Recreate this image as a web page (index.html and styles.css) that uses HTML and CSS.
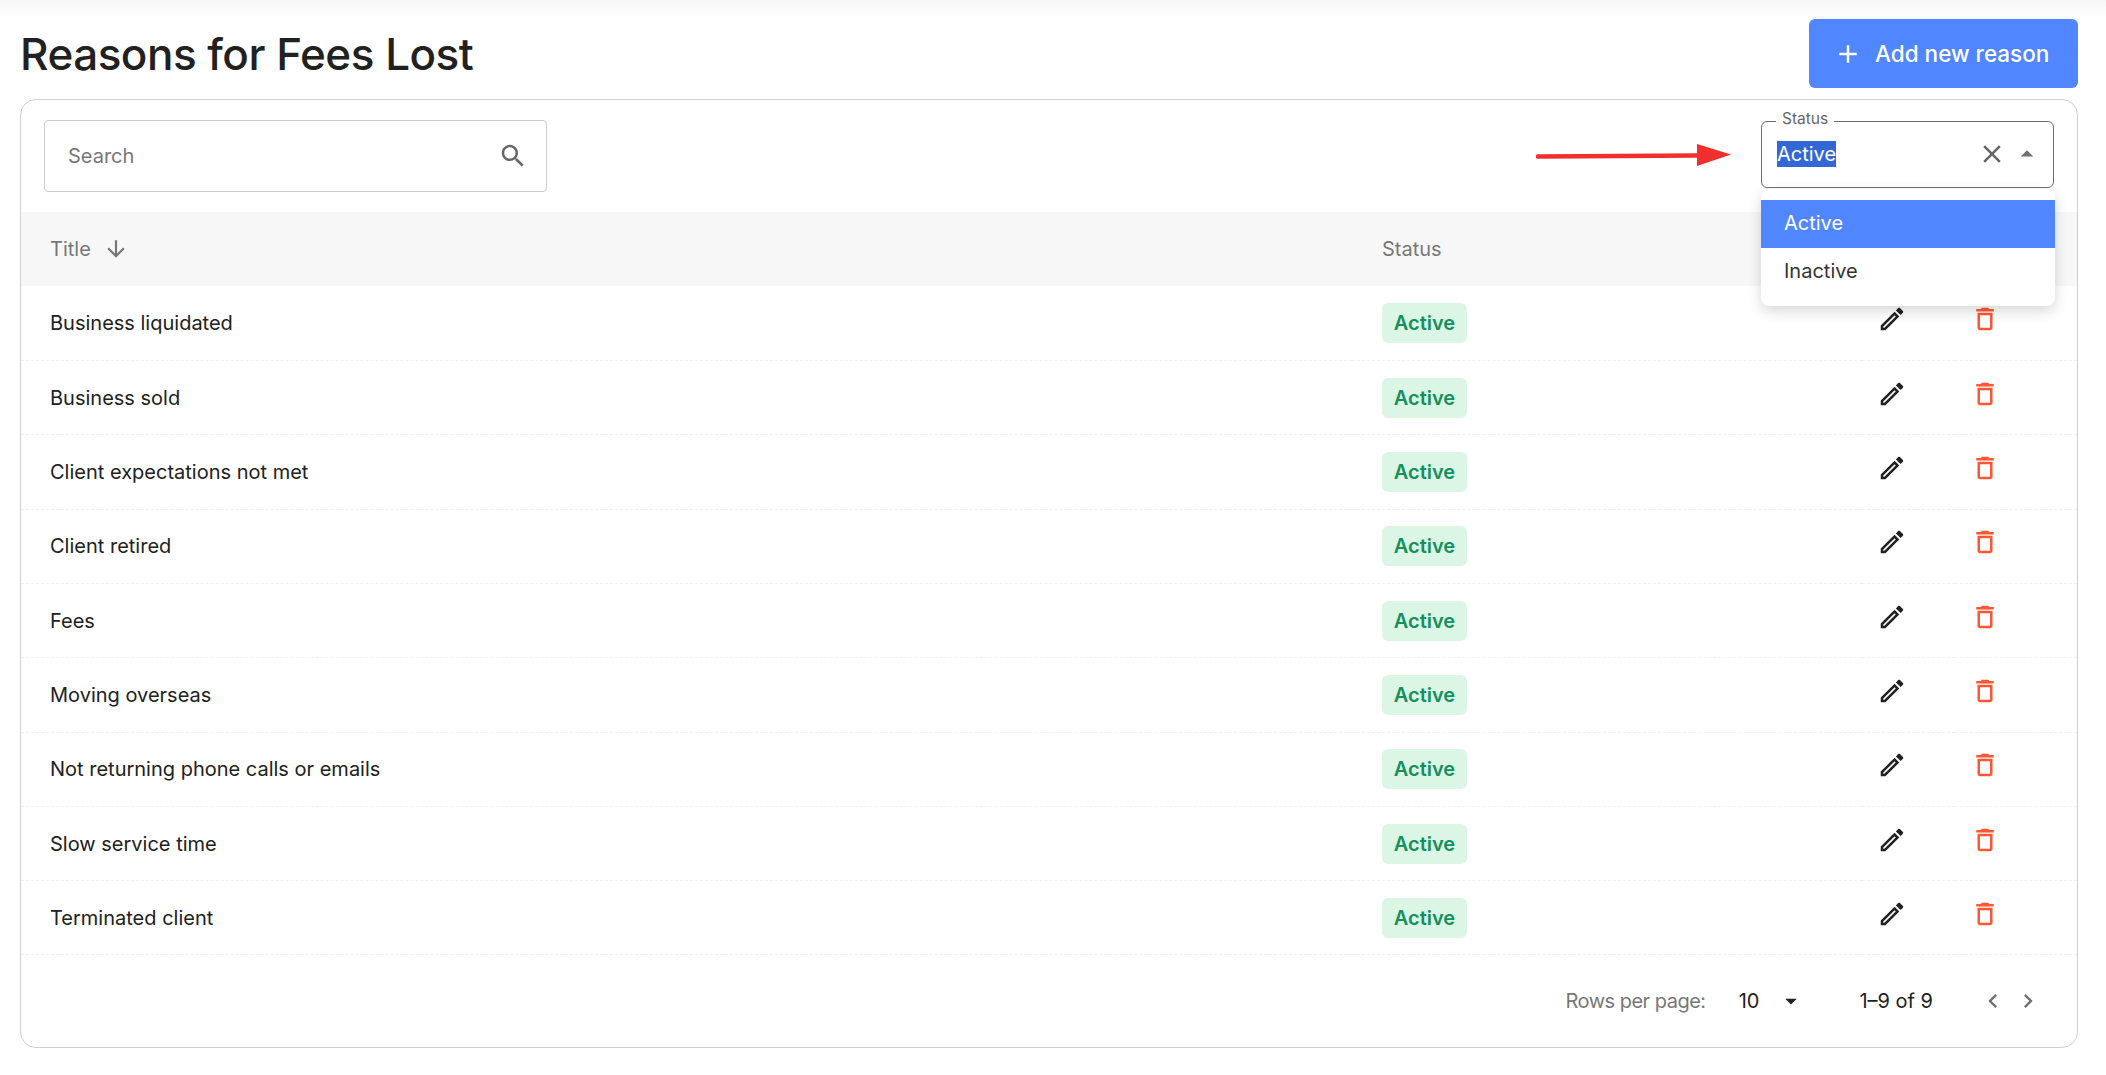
FILE: index.html
```html
<!DOCTYPE html>
<html lang="en">
<head>
    <meta charset="UTF-8">
    <meta name="viewport" content="width=device-width, initial-scale=1.0">
    <title>Reasons for Fees Lost</title>
    <link rel="stylesheet" href="styles.css">
</head>
<body>
    <svg class="defs" width="0" height="0">
        <symbol id="i-search" viewBox="0 0 24 24"><path d="M15.5 14h-.79l-.28-.27C15.41 12.59 16 11.11 16 9.5 16 5.91 13.09 3 9.5 3S3 5.91 3 9.5 5.91 16 9.5 16c1.61 0 3.09-.59 4.23-1.57l.27.28v.79l5 4.99L20.49 19l-4.99-5zm-6 0C7.01 14 5 11.99 5 9.5S7.01 5 9.5 5 14 7.01 14 9.5 11.99 14 9.5 14z"/></symbol>
        <symbol id="i-edit" viewBox="0 0 24 24"><path d="M14.06 9.02l.92.92L5.92 19H5v-.92l9.06-9.06M17.66 3c-.25 0-.51.1-.7.29l-1.83 1.83 3.75 3.75 1.83-1.83c.39-.39.39-1.02 0-1.41l-2.34-2.34c-.2-.2-.45-.29-.71-.29zm-3.6 3.19L3 17.25V21h3.75L17.81 9.94l-3.75-3.75z"/></symbol>
        <symbol id="i-delete" viewBox="0 0 24 24"><path d="M6 19c0 1.1.9 2 2 2h8c1.1 0 2-.9 2-2V7H6v12zM8 9h8v10H8V9zm7.5-5l-1-1h-5l-1 1H5v2h14V4h-3.5z"/></symbol>
    </svg>

    <div class="topshadow"></div>

    <div class="page">
        <div class="pagehead">
            <h1>Reasons for Fees Lost</h1>
            <button class="addbtn">
                <svg class="addicon" viewBox="0 0 24 24"><path d="M19 13h-6v6h-2v-6H5v-2h6V5h2v6h6v2z"/></svg>
                Add new reason
            </button>
        </div>

        <div class="card">
            <div class="toolbar">
                <div class="search">
                    <span>Search</span>
                    <svg class="searchicon"><use href="#i-search"/></svg>
                </div>

                <div class="statusfield">
                    <span class="statuslabel">Status</span>
                    <span class="statusvalue">Active</span>
                    <svg class="clearicon" viewBox="0 0 24 24"><path d="M19 6.41L17.59 5 12 10.59 6.41 5 5 6.41 10.59 12 5 17.59 6.41 19 12 13.41 17.59 19 19 17.59 13.41 12z"/></svg>
                    <svg class="upicon" viewBox="0 0 24 24"><path d="M7 14l5-5 5 5z"/></svg>

                    <svg class="redarrow" width="196" height="24" viewBox="0 0 196 24"><path d="M2 13.6L162 12.4" stroke="#f22e2e" stroke-width="4.5" stroke-linecap="round"/><path d="M161 1L195 11.6L161 23z" fill="#f22e2e"/></svg>

                    <div class="menu">
                        <div class="option selected">Active</div>
                        <div class="option">Inactive</div>
                    </div>
                </div>
            </div>

            <table>
                <colgroup>
                    <col class="col-title">
                    <col class="col-status">
                    <col class="col-edit">
                    <col class="col-delete">
                </colgroup>
                <thead>
                    <tr>
                        <th>
                            <span class="sorthead">Title
                                <svg class="sorticon" viewBox="0 0 24 24"><path d="M20 12l-1.41-1.41L13 16.17V4h-2v12.17l-5.58-5.59L4 12l8 8 8-8z"/></svg>
                            </span>
                        </th>
                        <th>Status</th>
                        <th></th>
                        <th></th>
                    </tr>
                </thead>
                <tbody>
                    <tr>
                        <td>Business liquidated</td>
                        <td><span class="badge">Active</span></td>
                        <td class="iconcell"><svg class="editicon"><use href="#i-edit"/></svg></td>
                        <td class="iconcell"><svg class="deleteicon"><use href="#i-delete"/></svg></td>
                    </tr>
                    <tr>
                        <td>Business sold</td>
                        <td><span class="badge">Active</span></td>
                        <td class="iconcell"><svg class="editicon"><use href="#i-edit"/></svg></td>
                        <td class="iconcell"><svg class="deleteicon"><use href="#i-delete"/></svg></td>
                    </tr>
                    <tr>
                        <td>Client expectations not met</td>
                        <td><span class="badge">Active</span></td>
                        <td class="iconcell"><svg class="editicon"><use href="#i-edit"/></svg></td>
                        <td class="iconcell"><svg class="deleteicon"><use href="#i-delete"/></svg></td>
                    </tr>
                    <tr>
                        <td>Client retired</td>
                        <td><span class="badge">Active</span></td>
                        <td class="iconcell"><svg class="editicon"><use href="#i-edit"/></svg></td>
                        <td class="iconcell"><svg class="deleteicon"><use href="#i-delete"/></svg></td>
                    </tr>
                    <tr>
                        <td>Fees</td>
                        <td><span class="badge">Active</span></td>
                        <td class="iconcell"><svg class="editicon"><use href="#i-edit"/></svg></td>
                        <td class="iconcell"><svg class="deleteicon"><use href="#i-delete"/></svg></td>
                    </tr>
                    <tr>
                        <td>Moving overseas</td>
                        <td><span class="badge">Active</span></td>
                        <td class="iconcell"><svg class="editicon"><use href="#i-edit"/></svg></td>
                        <td class="iconcell"><svg class="deleteicon"><use href="#i-delete"/></svg></td>
                    </tr>
                    <tr>
                        <td>Not returning phone calls or emails</td>
                        <td><span class="badge">Active</span></td>
                        <td class="iconcell"><svg class="editicon"><use href="#i-edit"/></svg></td>
                        <td class="iconcell"><svg class="deleteicon"><use href="#i-delete"/></svg></td>
                    </tr>
                    <tr>
                        <td>Slow service time</td>
                        <td><span class="badge">Active</span></td>
                        <td class="iconcell"><svg class="editicon"><use href="#i-edit"/></svg></td>
                        <td class="iconcell"><svg class="deleteicon"><use href="#i-delete"/></svg></td>
                    </tr>
                    <tr>
                        <td>Terminated client</td>
                        <td><span class="badge">Active</span></td>
                        <td class="iconcell"><svg class="editicon"><use href="#i-edit"/></svg></td>
                        <td class="iconcell"><svg class="deleteicon"><use href="#i-delete"/></svg></td>
                    </tr>
                </tbody>
            </table>

            <div class="pager">
                <span class="rowslabel">Rows per page:</span>
                <span class="rowsvalue">10</span>
                <svg class="rowscaret" viewBox="0 0 24 24"><path d="M7 10l5 5 5-5z"/></svg>
                <span class="range">1–9 of 9</span>
                <svg class="chevron" viewBox="0 0 24 24"><path d="M15.41 7.41L14 6l-6 6 6 6 1.41-1.41L10.83 12z"/></svg>
                <svg class="chevron" viewBox="0 0 24 24"><path d="M10 6L8.59 7.41 13.17 12l-4.58 4.58L10 18l6-6z"/></svg>
            </div>
        </div>
    </div>
</body>
</html>
```
FILE: styles.css
```css
body {
    margin: 0;
    font-family: Inter, "Noto Sans", sans-serif;
    font-size: 20px;
    color: #212121;
    background-color: white;
}
.defs { position: absolute; }
.topshadow {
    height: 19px;
    background: linear-gradient(#f6f6f6, white);
}
.page { padding: 0 28px 0 20px; }

.pagehead {
    display: flex;
    justify-content: space-between;
    align-items: center;
    height: 69px;
}
h1 {
    margin: 0;
    font-size: 44px;
    font-weight: 500;
    letter-spacing: -0.5px;
}
.addbtn {
    display: flex;
    align-items: center;
    width: 269px;
    height: 69px;
    padding: 0 0 0 24px;
    border: none;
    border-radius: 6px;
    background-color: #5086ff;
    color: white;
    font: inherit;
    font-size: 22.5px;
    font-weight: 500;
}
.addicon { width: 30px; height: 30px; margin-right: 12px; fill: white; }

.card {
    margin-top: 11px;
    border: 1px solid #cfcfcf;
    border-radius: 16px;
    height: 949px;
    box-sizing: border-box;
}
.toolbar {
    display: flex;
    justify-content: space-between;
    align-items: flex-start;
    padding: 20px 23px 20px 23px;
}
.search {
    display: flex;
    justify-content: space-between;
    align-items: center;
    box-sizing: border-box;
    width: 503px;
    height: 72px;
    padding: 0 18px 0 23px;
    border: 1px solid #cccccc;
    border-radius: 4px;
    color: #777;
}
.searchicon { width: 30px; height: 30px; fill: #666; }

.statusfield {
    position: relative;
    display: flex;
    align-items: center;
    box-sizing: border-box;
    width: 293px;
    height: 67px;
    margin-top: 1px;
    padding: 0 11px 0 15px;
    border: 1px solid #707070;
    border-radius: 6px;
}
.statuslabel {
    position: absolute;
    left: 14px;
    top: -13px;
    padding: 0 6px;
    background-color: white;
    font-size: 15.5px;
    color: #666;
}
.statusvalue {
    padding: 2px 0;
    margin-top: -1px;
    background-color: #3367d6;
    color: white;
    line-height: 22px;
}
.clearicon { width: 30px; height: 30px; margin: -2px 0 0 auto; fill: #666; }
.upicon { width: 30px; height: 30px; margin: -2px 0 0 5px; fill: #707070; }
.redarrow { position: absolute; left: -226px; top: 21px; }
.menu {
    position: absolute;
    left: -1px;
    top: 67px;
    z-index: 2;
    width: 294px;
    padding: 11px 0 11px;
    background-color: white;
    border-radius: 8px;
    box-shadow: 0 5px 14px rgba(0, 0, 0, 0.16);
}
.option {
    height: 47.5px;
    line-height: 47px;
    padding-left: 23px;
    color: #333;
}
.option.selected { background-color: #5086ff; color: white; }

table {
    width: 100%;
    border-collapse: collapse;
    table-layout: fixed;
}
.col-title { width: 1331px; }
.col-status { width: 510px; }
.col-edit { width: 93px; }
th, td {
    height: 74.3px;
    box-sizing: border-box;
    padding: 0 0 0 29px;
    text-align: left;
    font-weight: 400;
}
tr > :nth-child(2) { padding-left: 30px; }
th { background-color: #f7f7f7; color: #777; }
td { border-bottom: 1px dashed #f0f0f0; }
td.iconcell { padding: 0 0 8px 15px; }
.sorthead { display: inline-flex; align-items: center; }
.sorticon { width: 26px; height: 26px; margin-left: 12px; fill: #777; }
.badge {
    display: inline-block;
    width: 85px;
    height: 40px;
    line-height: 40px;
    text-align: center;
    border-radius: 6px;
    background-color: #dcf6e5;
    color: #14905f;
    font-weight: 600;
}
.editicon { display: block; width: 30px; height: 30px; fill: #212121; }
.deleteicon { display: block; width: 30px; height: 30px; fill: #ff5733; }

.pager {
    display: flex;
    align-items: center;
    justify-content: flex-end;
    height: 92px;
    padding-right: 35px;
}
.rowslabel { color: #777; letter-spacing: -0.5px; }
.rowsvalue { margin-left: 33px; }
.rowscaret { width: 28px; height: 28px; margin-left: 18px; fill: #212121; }
.range { margin-left: 54px; }
.chevron { width: 28px; height: 28px; margin-left: 7px; fill: #707070; }
.range + .chevron { margin-left: 46px; }
```
